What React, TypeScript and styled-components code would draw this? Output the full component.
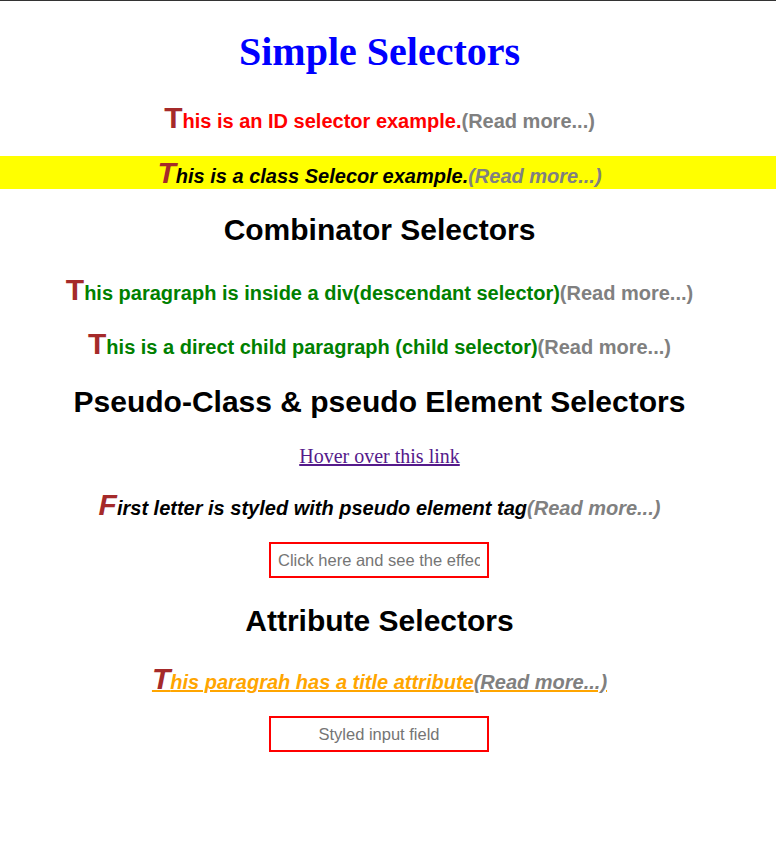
import React from "react";
import styled, { createGlobalStyle } from "styled-components";

const Global = createGlobalStyle`
  html, body { margin: 0; padding: 0; background: #fff; }
  body { border-top: 1px solid #333; font-family: "Liberation Sans", Arial, sans-serif; }
`;

const Page = styled.main`
  display: flex;
  flex-direction: column;
  align-items: stretch;
  text-align: center;
  padding: 28px 17px 0 0;
`;

const Title = styled.h1`
  margin: 0;
  font-family: "Liberation Serif", "Times New Roman", serif;
  font-size: 40px;
  font-weight: bold;
  color: #0000ff;
  line-height: 46px;
`;

const Heading = styled.h2`
  margin: 0;
  font-family: "Liberation Sans", Arial, sans-serif;
  font-size: 30px;
  font-weight: bold;
  color: #000;
  line-height: 34px;
`;

const Para = styled.p<{ $color: string; $italic?: boolean; $bg?: string; $under?: boolean }>`
  margin: 0;
  font-size: 20px;
  font-weight: bold;
  line-height: 33px;
  height: 33px;
  color: ${(p) => p.$color};
  font-style: ${(p) => (p.$italic ? "italic" : "normal")};
  text-decoration: ${(p) => (p.$under ? "underline" : "none")};
  ${(p) =>
    p.$bg
      ? `background: ${p.$bg}; margin-right: -17px; padding-right: 17px; padding-top: 4px; height: 29px;`
      : ""}
`;

const Initial = styled.span`
  font-size: 30px;
  line-height: 20px;
  color: #a52a2a;
`;

const More = styled.span`
  color: #808080;
`;

const LinkRow = styled.div`
  font-family: "Liberation Serif", "Times New Roman", serif;
  font-size: 20px;
  line-height: 24px;
`;

const Link = styled.a`
  color: #551a8b;
  text-decoration: underline;
`;

const Field = styled.input<{ $center?: boolean }>`
  box-sizing: border-box;
  width: 220px;
  height: 36px;
  border: 2px solid #ff0000;
  padding: 0 7px;
  font-family: "Liberation Sans", Arial, sans-serif;
  font-size: 16.5px;
  text-align: ${(p) => (p.$center ? "center" : "left")};
  outline: none;
  &::placeholder { color: #757575; }
`;

const FieldRow = styled.div`
  display: flex;
  justify-content: center;
  padding-right: 1px;
`;

const Gap = styled.div<{ $h: number }>`
  height: ${(p) => p.$h}px;
  flex-shrink: 0;
`;

export default function App() {
  return (
    <>
      <Global />
      <Page>
        <Title>Simple Selectors</Title>
        <Gap $h={30} />
        <Para $color="#ff0000">
          <Initial>T</Initial>his is an ID selector example.<More>(Read more...)</More>
        </Para>
        <Gap $h={18} />
        <Para $color="#000" $italic $bg="#ffff00">
          <Initial>T</Initial>his is a class Selecor example.<More>(Read more...)</More>
        </Para>
        <Gap $h={24} />
        <Heading>Combinator Selectors</Heading>
        <Gap $h={30} />
        <Para $color="#008000">
          <Initial>T</Initial>his paragraph is inside a div(descendant selector)<More>(Read more...)</More>
        </Para>
        <Gap $h={21} />
        <Para $color="#008000">
          <Initial>T</Initial>his is a direct child paragraph (child selector)<More>(Read more...)</More>
        </Para>
        <Gap $h={21} />
        <Heading>Pseudo-Class &amp; pseudo Element Selectors</Heading>
        <Gap $h={25} />
        <LinkRow>
          <Link href="#">Hover over this link</Link>
        </LinkRow>
        <Gap $h={24} />
        <Para $color="#000" $italic>
          <Initial>F</Initial>irst letter is styled with pseudo element tag<More>(Read more...)</More>
        </Para>
        <Gap $h={17} />
        <FieldRow>
          <Field placeholder="Click here and see the effect" />
        </FieldRow>
        <Gap $h={26} />
        <Heading>Attribute Selectors</Heading>
        <Gap $h={28} />
        <Para $color="#ffa500" $italic $under title="title">
          <Initial>T</Initial>his paragrah has a title attribute<More>(Read more...)</More>
        </Para>
        <Gap $h={17} />
        <FieldRow>
          <Field $center placeholder="Styled input field" />
        </FieldRow>
      </Page>
    </>
  );
}
